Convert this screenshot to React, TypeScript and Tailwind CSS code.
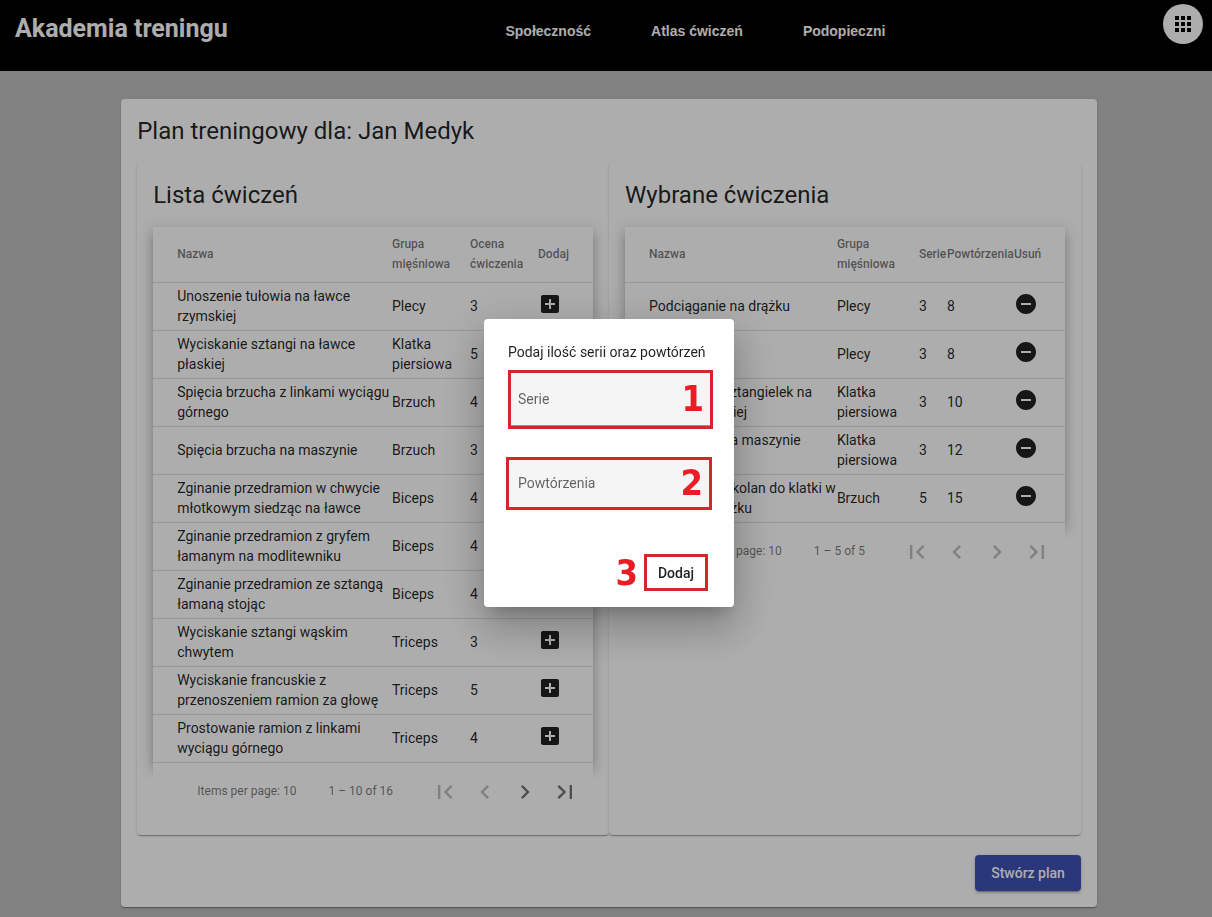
import React from "react";

type Exercise = { name: string; group: string; rating: number };
type Chosen = { name: string; group: string; sets: number; reps: number };

const exercises: Exercise[] = [
  { name: "Unoszenie tułowia na ławce rzymskiej", group: "Plecy", rating: 3 },
  { name: "Wyciskanie sztangi na ławce płaskiej", group: "Klatka piersiowa", rating: 5 },
  { name: "Spięcia brzucha z linkami wyciągu górnego", group: "Brzuch", rating: 4 },
  { name: "Spięcia brzucha na maszynie", group: "Brzuch", rating: 3 },
  { name: "Zginanie przedramion w chwycie młotkowym siedząc na ławce", group: "Biceps", rating: 4 },
  { name: "Zginanie przedramion z gryfem łamanym na modlitewniku", group: "Biceps", rating: 4 },
  { name: "Zginanie przedramion ze sztangą łamaną stojąc", group: "Biceps", rating: 4 },
  { name: "Wyciskanie sztangi wąskim chwytem", group: "Triceps", rating: 3 },
  { name: "Wyciskanie francuskie z przenoszeniem ramion za głowę", group: "Triceps", rating: 5 },
  { name: "Prostowanie ramion z linkami wyciągu górnego", group: "Triceps", rating: 4 },
];

const chosen: Chosen[] = [
  { name: "Podciąganie na drążku", group: "Plecy", sets: 3, reps: 8 },
  { name: "Wiosłowanie", group: "Plecy", sets: 3, reps: 8 },
  { name: "Wyciskanie sztangielek na ławce dodatniej", group: "Klatka piersiowa", sets: 3, reps: 10 },
  { name: "Wyciskanie na maszynie siedząc", group: "Klatka piersiowa", sets: 3, reps: 12 },
  { name: "Przyciąganie kolan do klatki w zwisie na drążku", group: "Brzuch", sets: 5, reps: 15 },
];

const paths = {
  apps: "M4 8h4V4H4v4zm6 12h4v-4h-4v4zm-6 0h4v-4H4v4zm0-6h4v-4H4v4zm6 0h4v-4h-4v4zm6-10v4h4V4h-4zm-6 4h4V4h-4v4zm6 6h4v-4h-4v4zm0 6h4v-4h-4v4z",
  addBox:
    "M19 3H5c-1.11 0-2 .9-2 2v14c0 1.1.89 2 2 2h14c1.1 0 2-.9 2-2V5c0-1.1-.9-2-2-2zm-2 10h-4v4h-2v-4H7v-2h4V7h2v4h4v2z",
  removeCircle:
    "M12 2C6.48 2 2 6.48 2 12s4.48 10 10 10 10-4.48 10-10S17.52 2 12 2zm5 11H7v-2h10v2z",
  first: "M18.41 16.59L13.82 12l4.59-4.59L17 6l-6 6 6 6zM6 6h2v12H6z",
  prev: "M15.41 7.41L14 6l-6 6 6 6 1.41-1.41L10.83 12z",
  next: "M10 6L8.59 7.41 13.17 12l-4.58 4.59L10 18l6-6z",
  last: "M5.59 7.41L10.18 12l-4.59 4.59L7 18l6-6-6-6zM16 6h2v12h-2z",
};

function Icon({ name, className }: { name: keyof typeof paths; className: string }) {
  return (
    <svg viewBox="0 0 24 24" fill="currentColor" aria-hidden="true" className={className}>
      <path d={paths[name]} />
    </svg>
  );
}

const cardShadow =
  "shadow-[0_2px_1px_-1px_rgba(0,0,0,0.2),0_1px_1px_0_rgba(0,0,0,0.14),0_1px_3px_0_rgba(0,0,0,0.12)]";
const tableShadow =
  "shadow-[0_5px_5px_-3px_rgba(0,0,0,0.2),0_8px_10px_1px_rgba(0,0,0,0.14),0_3px_14px_2px_rgba(0,0,0,0.12)]";

function Panel({ title, children }: { title: string; children: React.ReactNode }) {
  return (
    <section className={`min-w-0 flex-1 rounded bg-white p-4 ${cardShadow}`}>
      <h2 className="mb-4 text-2xl leading-8">{title}</h2>
      {children}
    </section>
  );
}

function DataTable({
  columns,
  children,
}: {
  columns: { label: string; col: string }[];
  children: React.ReactNode;
}) {
  return (
    <table className={`w-full table-fixed border-separate border-spacing-0 bg-white text-left text-sm ${tableShadow}`}>
      <colgroup>
        {columns.map((c) => (
          <col key={c.label} className={c.col} />
        ))}
      </colgroup>
      <thead>
        <tr className="h-14">
          {columns.map((c) => (
            <th
              key={c.label}
              className="border-b border-black/12 p-0 pb-px text-xs leading-5 font-medium text-black/54 first:pl-6"
            >
              {c.label}
            </th>
          ))}
        </tr>
      </thead>
      <tbody>{children}</tbody>
    </table>
  );
}

function Cell({ children }: { children: React.ReactNode }) {
  return <td className="border-b border-black/12 p-0 pb-px leading-5 first:pl-6">{children}</td>;
}

function Paginator({ range, more }: { range: string; more: boolean }) {
  const buttons = [
    { icon: "first", label: "First page", on: false },
    { icon: "prev", label: "Previous page", on: false },
    { icon: "next", label: "Next page", on: more },
    { icon: "last", label: "Last page", on: more },
  ] as const;
  return (
    <div className="relative flex h-14 items-center justify-end bg-white px-2 text-xs text-black/54">
      <span className="mr-2">Items per page: 10</span>
      <span className="mr-8 ml-6">{range}</span>
      {buttons.map((b) => (
        <button
          key={b.icon}
          type="button"
          aria-label={b.label}
          disabled={!b.on}
          className="flex size-10 items-center justify-center pt-0.5 text-black/54 disabled:text-black/26"
        >
          <Icon name={b.icon} className="size-7" />
        </button>
      ))}
    </div>
  );
}

function Field({
  label,
  mark,
  className,
  inputClass,
}: {
  label: string;
  mark: string;
  className: string;
  inputClass: string;
}) {
  return (
    <div className={`border-3 border-[#d8252b] bg-[#f5f5f5] ${className}`}>
      <div className={`flex h-full items-center ${inputClass}`}>
        <input
          type="text"
          aria-label={label}
          placeholder={label}
          className="min-w-0 flex-1 bg-transparent text-sm outline-none placeholder:text-black/60"
        />
        <Mark>{mark}</Mark>
      </div>
    </div>
  );
}

function Mark({ children }: { children: React.ReactNode }) {
  return (
    <span className="mr-1.5 font-['DejaVu_Sans_Condensed','DejaVu_Sans',sans-serif] text-4xl leading-9 font-bold text-[#ea1c24]">
      {children}
    </span>
  );
}

export default function App() {
  return (
    <div className="min-h-screen bg-[#bfbfbf] pb-2.5 font-['Roboto',sans-serif] text-black/87">
      <header className="flex h-[71px] items-start justify-between bg-black pr-[9px] pl-[15px] text-white">
        <h1 className="pt-[13px] text-[25px] leading-8 font-bold">Akademia treningu</h1>
        <nav className="flex gap-[60px] pt-[21px] font-['Liberation_Sans',sans-serif] text-sm leading-5 font-bold">
          <a href="#spolecznosc">Społeczność</a>
          <a href="#atlas">Atlas ćwiczeń</a>
          <a href="#podopieczni">Podopieczni</a>
        </nav>
        <button
          type="button"
          aria-label="Menu"
          className="mt-1 flex size-10 items-center justify-center rounded-full bg-white text-black"
        >
          <Icon name="apps" className="size-6" />
        </button>
      </header>

      <main className={`mt-7 mr-[9.5%] ml-[10%] rounded bg-white p-4 ${cardShadow}`}>
        <h2 className="mb-4 text-2xl leading-8">Plan treningowy dla: Jan Medyk</h2>
        <div className="flex">
          <Panel title="Lista ćwiczeń">
            <DataTable
              columns={[
                { label: "Nazwa", col: "w-auto" },
                { label: "Grupa mięśniowa", col: "w-[78px]" },
                { label: "Ocena ćwiczenia", col: "w-[68px]" },
                { label: "Dodaj", col: "w-[55px]" },
              ]}
            >
              {exercises.map((e) => (
                <tr key={e.name} className="h-12">
                  <Cell>{e.name}</Cell>
                  <Cell>{e.group}</Cell>
                  <Cell>{e.rating}</Cell>
                  <Cell>
                    <button type="button" aria-label={`Dodaj: ${e.name}`} className="block pb-1">
                      <Icon name="addBox" className="size-6" />
                    </button>
                  </Cell>
                </tr>
              ))}
            </DataTable>
            <Paginator range="1 – 10 of 16" more />
          </Panel>
          <Panel title="Wybrane ćwiczenia">
            <DataTable
              columns={[
                { label: "Nazwa", col: "w-auto" },
                { label: "Grupa mięśniowa", col: "w-[82px]" },
                { label: "Serie", col: "w-7" },
                { label: "Powtórzenia", col: "w-[67px]" },
                { label: "Usuń", col: "w-[51px]" },
              ]}
            >
              {chosen.map((e) => (
                <tr key={e.name} className="h-12">
                  <Cell>{e.name}</Cell>
                  <Cell>{e.group}</Cell>
                  <Cell>{e.sets}</Cell>
                  <Cell>{e.reps}</Cell>
                  <Cell>
                    <button type="button" aria-label={`Usuń: ${e.name}`} className="block pb-1">
                      <Icon name="removeCircle" className="size-6" />
                    </button>
                  </Cell>
                </tr>
              ))}
            </DataTable>
            <Paginator range="1 – 5 of 5" more={false} />
          </Panel>
        </div>
        <div className="mt-5 flex justify-end">
          <button
            type="button"
            className="h-9 rounded bg-[#3f51b5] px-4 text-sm font-medium text-white shadow-[0_3px_1px_-2px_rgba(0,0,0,0.2),0_2px_2px_0_rgba(0,0,0,0.14),0_1px_5px_0_rgba(0,0,0,0.12)]"
          >
            Stwórz plan
          </button>
        </div>
      </main>

      <div className="fixed inset-0 flex items-center justify-center bg-black/32 pt-[9px] pl-1.5">
        <div
          role="dialog"
          aria-modal="true"
          aria-label="Podaj ilość serii oraz powtórzeń"
          className="w-[250px] rounded bg-white pt-6 pr-[21px] pb-4 pl-6 shadow-[0_11px_15px_-7px_rgba(0,0,0,0.2),0_24px_38px_3px_rgba(0,0,0,0.14),0_9px_46px_8px_rgba(0,0,0,0.12)]"
        >
          <p className="text-sm leading-[18px] whitespace-nowrap">Podaj ilość serii oraz powtórzeń</p>
          <Field label="Serie" mark="1" className="mt-[9px] h-[59px]" inputClass="border-b border-[#949494] pl-[7px]" />
          <Field label="Powtórzenia" mark="2" className="mt-7 mr-px -ml-0.5 h-[53px]" inputClass="pb-0.5 pl-[9px]" />
          <div className="mt-11 mr-[5px] flex items-center justify-end">
            <Mark>3</Mark>
            <button
              type="button"
              className="h-[37px] w-16 border-3 border-[#d8252b] text-sm font-medium"
            >
              Dodaj
            </button>
          </div>
        </div>
      </div>
    </div>
  );
}
